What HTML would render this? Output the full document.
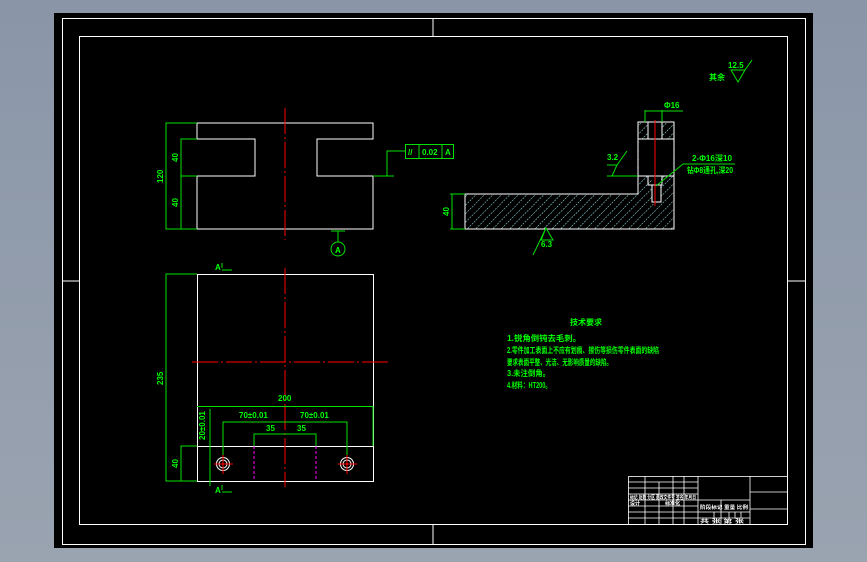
<!DOCTYPE html>
<html><head><meta charset="utf-8"><style>
html,body{margin:0;padding:0;width:867px;height:562px;overflow:hidden;background:linear-gradient(#8a96a8,#9aa3b0);}
svg{position:absolute;left:0;top:0}
text{font-family:"Liberation Sans","Noto Sans CJK SC",sans-serif;fill:#00ff00;font-weight:bold;font-size:8px}
</style></head><body>
<svg width="867" height="562" viewBox="0 0 867 562">
<defs>
<pattern id="h" width="6" height="6" patternUnits="userSpaceOnUse" patternTransform="rotate(45)"><line x1="0" y1="0" x2="0" y2="6" stroke="#9ff0f0" stroke-width="1" stroke-dasharray="2 1"/></pattern>
</defs>
<rect x="54" y="13" width="759" height="535" fill="#000"/>
<g fill="none" stroke="#fff" stroke-width="1">
<rect x="62.5" y="18.5" width="743" height="526"/>
<rect x="79.5" y="36.5" width="708" height="488"/>
<line x1="433" y1="18" x2="433" y2="36"/><line x1="433" y1="525" x2="433" y2="544"/>
<line x1="62" y1="281" x2="79" y2="281"/><line x1="788" y1="281" x2="806" y2="281"/>
</g>
<!-- top view -->
<path d="M197 123H373V139H317V176H373V229H197V176H255V139H197Z" fill="none" stroke="#fff"/>
<line x1="285" y1="108" x2="285" y2="240" stroke="#f00" stroke-dasharray="26 3 2 3"/>
<g stroke="#00e000" fill="none">
<path d="M197 123H166V229H197M197 139H181V229M181 176H197"/>
<path d="M373 176H394M387 176V151H405"/>
<rect x="405.5" y="144.5" width="48" height="14"/><line x1="419" y1="144" x2="419" y2="159"/><line x1="442" y1="144" x2="442" y2="159"/>
<path d="M331 231H345M338 231V242"/><circle cx="338" cy="249" r="7"/>
</g>
<text x="408" y="155">//</text><text x="422" y="155">0.02</text><text x="445" y="155">A</text>
<text x="335" y="253">A</text>
<text transform="translate(163,183) rotate(-90)">120</text>
<text transform="translate(178,162) rotate(-90)">40</text>
<text transform="translate(178,207) rotate(-90)">40</text>
<!-- front view -->
<rect x="197.5" y="274.5" width="176" height="207" fill="none" stroke="#fff"/>
<line x1="197" y1="446.5" x2="373" y2="446.5" stroke="#fff"/>
<line x1="285" y1="268" x2="285" y2="487" stroke="#f00" stroke-dasharray="26 3 2 3"/>
<line x1="192" y1="362" x2="389" y2="362" stroke="#f00" stroke-dasharray="26 3 2 3"/>
<g stroke="#00e000" fill="none">
<path d="M197 274H166V481H197M197 446H181V481M197 406.5H373V446"/>
<line x1="210" y1="409" x2="210" y2="486"/>
<path d="M223 464V422H347V464M254 446V434H316V446"/>
<path d="M222 268V263M222 270H232M222 490V485M222 492H232"/>
</g>
<g stroke="#f0f" stroke-dasharray="3 2"><line x1="254" y1="446" x2="254" y2="481"/><line x1="316" y1="446" x2="316" y2="481"/></g>
<g fill="none" stroke="#fff"><circle cx="223" cy="464" r="6.5"/><circle cx="223" cy="464" r="4"/><circle cx="347" cy="464" r="6.5"/><circle cx="347" cy="464" r="4"/></g>
<g stroke="#f00"><path d="M214 464H233M223 455V474M338 464H357M347 455V474"/></g>
<text x="215" y="270">A</text><text x="215" y="493">A</text>
<text transform="translate(163,385) rotate(-90)">235</text>
<text transform="translate(178,468) rotate(-90)">40</text>
<text transform="translate(205,440) rotate(-90)">20±0.01</text>
<text x="278" y="401">200</text>
<text x="239" y="418">70±0.01</text><text x="300" y="418">70±0.01</text>
<text x="266" y="431">35</text><text x="297" y="431">35</text>
<!-- side view -->
<path d="M465 194H638V122H674V229H465Z" fill="url(#h)" stroke="#fff"/>
<rect x="648" y="123" width="14" height="16" fill="#000"/>
<rect x="639" y="139" width="34" height="37" fill="#000"/>
<rect x="652" y="176" width="9" height="28" fill="#000"/>
<g fill="none" stroke="#fff"><path d="M638 139H674M638 176H674M648 122V139M662 122V139M648 176V185H662V176M652 185V202H661V185"/></g>
<line x1="655" y1="120" x2="655" y2="206" stroke="#f00"/>
<g stroke="#00e000" fill="none">
<path d="M465 194H450M465 229H450M452 194V229"/>
<path d="M645 122V110M662 122V110M645 111H683"/>
<path d="M607 176H638M607 165H617L612 176M617 165L627 151"/>
<path d="M546 228L541 240H553Z M533 255L546 228"/>
<path d="M683 164H735M683 164L656 186"/>
<path d="M731 70H745L738 82Z M745 70L752 60"/>
</g>
<text transform="translate(449,216) rotate(-90)">40</text>
<text x="664" y="108">Φ16</text>
<text x="607" y="160">3.2</text>
<text x="541" y="247">6.3</text>
<text x="692" y="161" textLength="40" lengthAdjust="spacingAndGlyphs">2-Φ16深10</text>
<text x="687" y="173" textLength="46" lengthAdjust="spacingAndGlyphs">钻Φ8通孔,深20</text>
<text x="728" y="68">12.5</text>
<text x="709" y="80">其余</text>
<!-- tech req -->
<text x="570" y="325">技术要求</text>
<text x="507" y="341" textLength="74" lengthAdjust="spacingAndGlyphs">1.锐角倒钝去毛刺。</text>
<text x="507" y="353" textLength="152" lengthAdjust="spacingAndGlyphs">2.零件加工表面上不应有划痕、擦伤等损伤零件表面的缺陷</text>
<text x="507" y="365" textLength="105" lengthAdjust="spacingAndGlyphs">要求表面平整、光洁、无影响质量的缺陷。</text>
<text x="507" y="376" textLength="43" lengthAdjust="spacingAndGlyphs">3.未注倒角。</text>
<text x="507" y="388" textLength="44" lengthAdjust="spacingAndGlyphs">4.材料：HT200。</text>
<!-- title block -->
<g fill="none" stroke="#fff" stroke-width="0.8">
<rect x="628.5" y="476.5" width="159" height="48"/>
<path d="M628 482H698M628 488H698M628 494H698M628 500H698M628 506H698M628 512H698M628 518H698"/>
<path d="M645 476V525M659 482V525M673 476V525M684 476V525M698 476V525"/>
<path d="M698 500H750M698 512H750M698 518H750M750 476V525M750 492H788M750 509H788"/>
<path d="M721 500V525M729 512V518M735 512V518M741 512V518M714 512V518"/>
</g>
<g><text x="630" y="499" style="font-size:5px;fill:#fff" textLength="66" lengthAdjust="spacingAndGlyphs">标记 处数 分区 更改文件号 签名 年月日</text><text x="630" y="505" style="font-size:5px;fill:#fff">设计</text><text x="665" y="505" style="font-size:5px;fill:#fff">标准化</text><text x="700" y="509" style="font-size:5px;fill:#fff" textLength="48" lengthAdjust="spacingAndGlyphs">阶段标记 重量 比例</text><text x="700" y="523" style="font-size:5px;fill:#fff" textLength="44" lengthAdjust="spacingAndGlyphs">共 张 第 张</text></g>
</svg>
</body></html>
